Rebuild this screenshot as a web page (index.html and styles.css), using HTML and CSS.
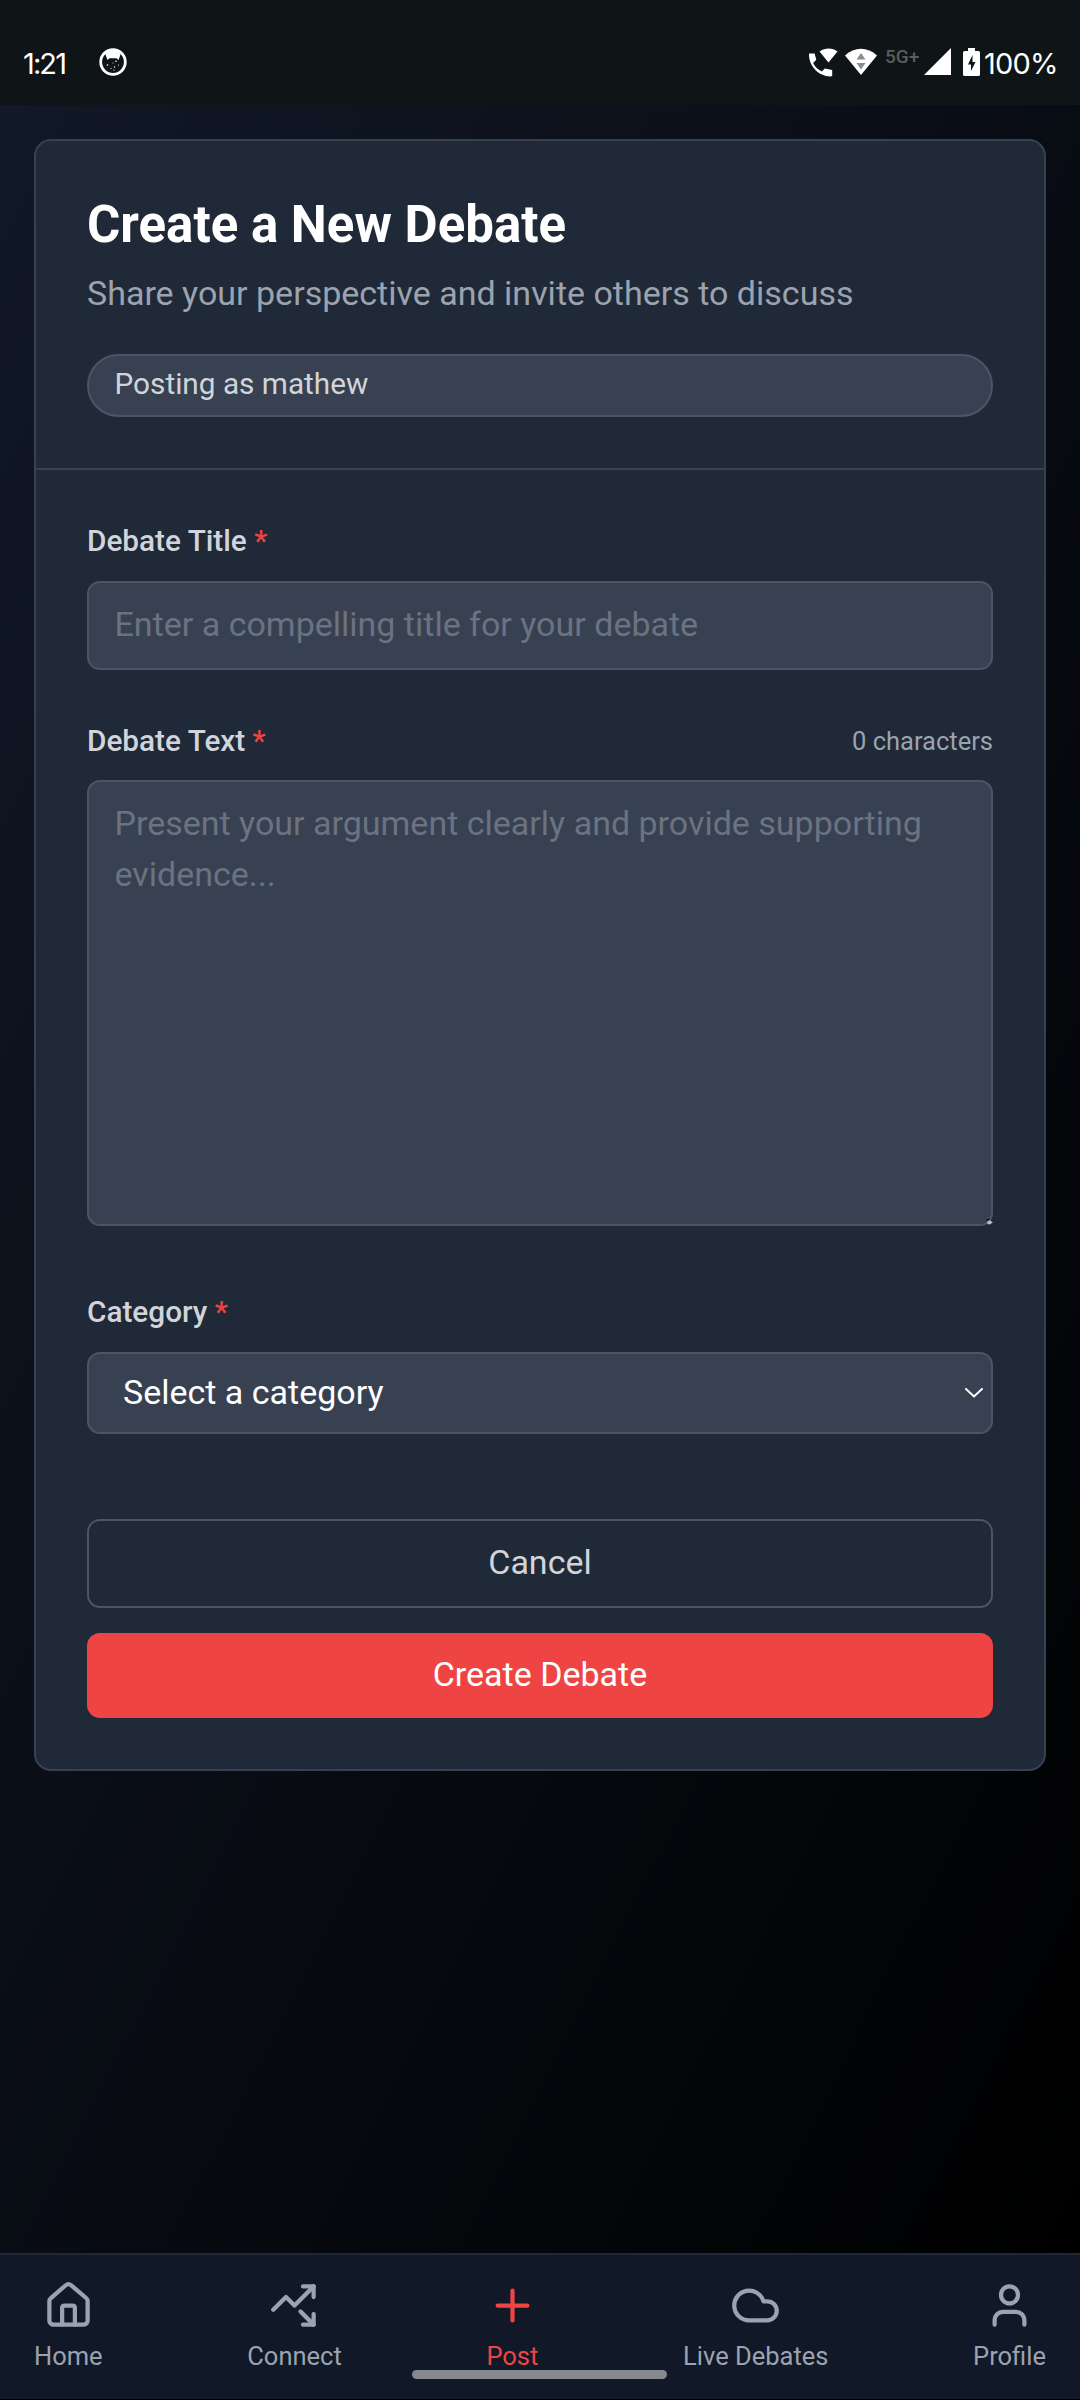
FILE: index.html
```html
<!DOCTYPE html>
<html lang="en">
<head>
<meta charset="utf-8">
<title>Create a New Debate</title>
<link rel="stylesheet" href="styles.css">
</head>
<body>
<div class="screen">
  <header class="status">
    <span class="status-time">1:21</span>
    <svg class="status-app" viewBox="0 0 28 28">
      <circle cx="14" cy="14" r="12.3" fill="#0f1416" stroke="#fff" stroke-width="2.8"/>
      <path d="M6 4.500Q14-1 22 4.500L21 8l-1.500 4-2-1.800h-7L8.500 12 7 8z" fill="#fff"/>
      <path d="M5 11.500V7.500l3 3.500zM23 11.500V7.500l-3 3.500z" fill="#0f1416"/>
      <g fill="#fff"><circle cx="17" cy="13.2" r=".8"/><circle cx="8.500" cy="17" r=".8"/><circle cx="14" cy="15" r=".5"/><circle cx="19.500" cy="17" r=".6"/><circle cx="15.500" cy="19" r=".7"/><circle cx="12" cy="20.500" r=".6"/><circle cx="15" cy="22" r=".6"/></g>
    </svg>
    <div class="status-icons">
      <svg class="i-call" viewBox="0 0 30 30" fill="#fff">
        <path d="M1 5.500h5.600l1.700 6.300-3.200 3.200c2 4 4.600 6.500 8.600 8.400l3.200-3 7.300 1.500v6.400C12 29.500.5 19 1 5.500z"/>
        <path d="M11.500 3.600c5.500-4 13-4 18 0L20.500 14.500z"/>
      </svg>
      <svg class="i-wifi" viewBox="0 0 32 28">
        <path d="M0 7.500C9.500-1.500 22.500-1.500 32 7.500L16 27z" fill="#fff"/>
        <path d="M11.500 11.500 16 5l4.500 6.500zM11.500 15h9L16 21.500z" fill="#8a8c8d"/>
      </svg>
      <span class="net">5G+</span>
      <svg class="i-signal" viewBox="0 0 27 27" fill="#fff"><path d="M0 27 27 0v27z"/></svg>
      <svg class="i-batt" viewBox="0 0 17 28"><path d="M5 0h7v3h3.500Q17 3 17 4.500v22Q17 28 15.500 28h-14Q0 28 0 26.500v-22Q0 3 1.500 3H5z" fill="#fff"/><path d="M9.500 7 5 16.500h3V23l4.500-9H9.500z" fill="#0f1416"/></svg>
      <span class="pct">100%</span>
    </div>
  </header>

  <main class="page">
    <section class="card">
      <div class="card-head">
        <h1 class="title">Create a New Debate</h1>
        <p class="subtitle">Share your perspective and invite others to discuss</p>
        <div class="pill">Posting as mathew</div>
      </div>
      <form class="form">
        <div class="field">
          <div class="label-row"><label class="label">Debate Title <span class="req">*</span></label></div>
          <div class="control input">Enter a compelling title for your debate</div>
        </div>
        <div class="field field-text">
          <div class="label-row"><label class="label">Debate Text <span class="req">*</span></label><span class="count">0 characters</span></div>
          <div class="control textarea">Present your argument clearly and provide supporting evidence...
            <svg class="grip" viewBox="0 0 7 6"><path d="M.5.8h3" stroke="#0b0d12" stroke-width="1.500"/><path d="M1 3 3.500 1l3.300 2.200L4 5.600 1.500 5z" fill="#b9bbbf"/></svg>
          </div>
        </div>
        <div class="field field-last">
          <div class="label-row"><label class="label">Category <span class="req">*</span></label></div>
          <div class="control select"><span>Select a category</span>
            <svg class="chev" viewBox="0 0 18 10"><path d="M1 1l8 7.500L17 1" fill="none" stroke="#fff" stroke-width="2" stroke-linecap="round"/></svg>
          </div>
        </div>
        <button type="button" class="btn btn-cancel">Cancel</button>
        <button type="button" class="btn btn-create">Create Debate</button>
      </form>
    </section>
  </main>

  <nav class="nav">
    <a class="nav-item"><svg class="icon" viewBox="0 0 24 24"><path d="M15 21v-8a1 1 0 0 0-1-1h-4a1 1 0 0 0-1 1v8"/><path d="M3 10a2 2 0 0 1 .709-1.528l7-5.999a2 2 0 0 1 2.582 0l7 5.999A2 2 0 0 1 21 10v9a2 2 0 0 1-2 2H5a2 2 0 0 1-2-2z"/></svg><span>Home</span></a>
    <a class="nav-item"><svg class="icon" viewBox="0 0 24 24"><path d="M14.828 14.828 21 21"/><path d="M21 16v5h-5"/><path d="m21 3-9 9-4-4-6 6"/><path d="M21 8V3h-5"/></svg><span>Connect</span></a>
    <a class="nav-item active"><svg class="icon" viewBox="0 0 24 24"><path d="M5 12h14M12 5v14"/></svg><span>Post</span></a>
    <a class="nav-item"><svg class="icon" viewBox="0 0 24 24"><path d="M17.500 19H9a7 7 0 1 1 6.710-9h1.790a4.500 4.500 0 1 1 0 9Z"/></svg><span>Live Debates</span></a>
    <a class="nav-item"><svg class="icon" viewBox="0 0 24 24"><path d="M19 21v-2a4 4 0 0 0-4-4H9a4 4 0 0 0-4 4v2"/><circle cx="12" cy="7" r="4"/></svg><span>Profile</span></a>
    <div class="gesture"></div>
  </nav>
</div>
</body>
</html>
```
FILE: styles.css
```css
* { box-sizing: border-box; }
body { margin: 0; background: #000; }
.screen {
  width: 1080px; height: 2400px;
  display: flex; flex-direction: column;
  font-family: Roboto, sans-serif; font-size: 34px; line-height: 51px;
  color: #fff; overflow: hidden;
}
.status {
  height: 105px; flex: none; background: #0f1416;
  display: flex; align-items: flex-start; padding: 0 23px;
  font-family: Inter, sans-serif; font-size: 29px; line-height: 36px;
}
.status-time { width: 76px; padding-top: 46px; letter-spacing: -1.9px; }
.status-app { width: 28px; height: 28px; margin-top: 48px; }
.status-icons { margin-left: auto; display: flex; align-items: flex-start; }
.i-call { width: 30px; height: 30px; margin: 48px 7px 0 0; }
.i-wifi { width: 32px; height: 28px; margin: 48px 8px 0 0; }
.net { font-family: Roboto, sans-serif; font-size: 19px; font-weight: 500; line-height: 24px; color: #5a5d5f; width: 35px; margin: 45px 4px 0 0; }
.i-signal { width: 27px; height: 27px; margin: 48px 12px 0 0; }
.i-batt { width: 17px; height: 28px; margin: 48px 4px 0 0; }
.pct { padding-top: 46px; width: 73px; letter-spacing: -.8px; }

.page {
  flex: 1; padding: 34px;
  background: linear-gradient(to bottom right, #111827, #000);
}
.card {
  height: 1632px; background: #1f2937;
  border: 2px solid #374151; border-radius: 17px;
}
.card-head { height: 329px; padding: 50px 51px 0; border-bottom: 2px solid #374151; }
.title { margin: 0; font-size: 51px; line-height: 68px; font-weight: 700; }
.subtitle { margin: 9px 0 0; line-height: 51px; color: #9ca3af; }
.pill {
  height: 63px; margin-top: 35px; padding: 6px 25.5px; line-height: 44px;
  font-size: 29.75px; color: #d1d5db;
  background: #374151; border: 2px solid #4b5563; border-radius: 32px;
}
.form { padding: 51px 51px 0; display: flex; flex-direction: column; }
.field { display: flex; flex-direction: column; gap: 20px; margin-bottom: 50px; }
.field-text { margin-top: 1px; gap: 19px; }
.label-row { display: flex; justify-content: space-between; align-items: center; height: 40px; }
.label { font-size: 29.75px; line-height: 42px; font-weight: 500; color: #d1d5db; }
.req { color: #ef4444; }
.count { font-size: 25.5px; line-height: 34px; color: #9ca3af; }
.control { background: #374151; border: 2px solid #4b5563; border-radius: 13px; }
.input { height: 89px; padding: 16px 25.5px; color: #6b7280; }
.textarea { position: relative; height: 446px; padding: 16px 25.5px; color: #6b7280; }
.grip { position: absolute; right: -2px; bottom: -1px; width: 7px; height: 6px; }
.select { height: 82px; padding: 0 8px 1px 34px; display: flex; align-items: center; justify-content: space-between; }
.chev { width: 18px; height: 10px; margin-top: 1px; }
.field-last { margin: 16px 0 85px; }
.btn { font: inherit; border-radius: 13px; padding: 0 0 2px; }
.btn-cancel { height: 89px; color: #d1d5db; background: transparent; border: 2px solid #4b5563; }
.btn-create { height: 85px; margin-top: 25px; color: #fff; background: #ef4444; border: 0; }

.nav {
  position: relative; flex: none; height: 147px; padding: 25px 34px 0;
  display: flex; justify-content: space-between; align-items: flex-start;
  background: #111827; border-top: 2px solid #1f2937; border-bottom: 1px solid #000;
  font-size: 25.5px; line-height: 34px; color: #9ca3af;
}
.nav-item { display: flex; flex-direction: column; align-items: center; gap: 8px; }
.active { color: #ef4444; }
.icon { width: 51px; height: 51px; fill: none; stroke: currentColor; stroke-width: 2; stroke-linecap: round; stroke-linejoin: round; }
.gesture { position: absolute; left: 412px; top: 115px; width: 255px; height: 9px; border-radius: 5px; background: #86888f; }
```
